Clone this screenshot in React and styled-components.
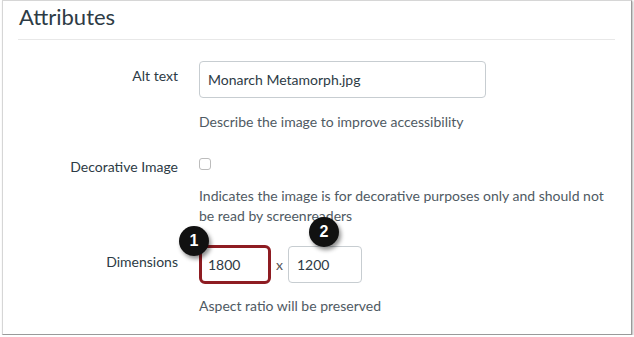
import styled, { createGlobalStyle } from "styled-components";

const Global = createGlobalStyle`
    body {
        margin: 0;
        background: #fff;
        font-family: Lato, "Open Sans", sans-serif;
    }
`

// MOLDURA
const Frame = styled.div`
    margin-left: 2px;
    width: 630px;
    height: 335px;
    box-sizing: border-box;
    border: 1px solid #d6d6d6;
    border-right-color: #9a9a9a;
    border-bottom-color: #9a9a9a;
    box-shadow: 1px 1px 2px rgba(0, 0, 0, 0.3);
    padding: 0 16px 0 15px;
    overflow: hidden;
`

const Heading = styled.h2`
    margin: 0;
    padding: 3px 0 9px 1px;
    font-size: 22px;
    line-height: 26px;
    font-weight: 400;
    color: #2d3b45;
    border-bottom: 1px solid #e8e8e8;
`

// LINHAS DO FORMULARIO
const Row = styled.div`
    display: grid;
    grid-template-columns: 160px 1fr;
    column-gap: 21px;
    margin-top: ${(p) => p.$gap}px;
`

const Label = styled.div`
    text-align: right;
    font-size: 14px;
    line-height: 20px;
    color: #2d3b45;
    padding-top: ${(p) => p.$top}px;
`

const Field = styled.div`
    display: flex;
    flex-direction: column;
    align-items: flex-start;
`

const TextInput = styled.div`
    box-sizing: border-box;
    width: ${(p) => p.$width}px;
    height: ${(p) => (p.$focus ? 39 : 37)}px;
    border: ${(p) => (p.$focus ? "3px solid #8e1c22" : "1px solid #c7cdd1")};
    border-radius: ${(p) => (p.$focus ? 6 : 4)}px;
    padding-left: ${(p) => (p.$focus ? 6 : 8)}px;
    display: flex;
    align-items: center;
    font-size: 14px;
    color: #2d3b45;
    position: relative;
    background: #fff;
`

const Hint = styled.p`
    margin: ${(p) => p.$top}px 0 0 0;
    font-size: 14px;
    line-height: 20px;
    color: #4f5a63;
`

const Checkbox = styled.span`
    display: block;
    box-sizing: border-box;
    width: 12px;
    height: 12px;
    margin-top: 6px;
    border: 1px solid #bcbcbc;
    border-radius: 3px;
`

const DimRow = styled.div`
    display: flex;
    align-items: center;
    gap: 5px;
`

const Times = styled.span`
    font-size: 14px;
    color: #555;
`

const Badge = styled.span`
    position: absolute;
    left: ${(p) => p.$x}px;
    top: ${(p) => p.$y}px;
    width: 30px;
    height: 30px;
    border-radius: 50%;
    background: #111;
    color: #fff;
    font-family: "Liberation Sans", Arial, sans-serif;
    font-weight: 700;
    font-size: 16px;
    display: flex;
    align-items: center;
    justify-content: center;
    box-shadow: 2px 3px 4px rgba(0, 0, 0, 0.45);
`

function App() {
    return (
        <>
            <Global />
            <Frame>
                <Heading>Attributes</Heading>

                <Row $gap={21}>
                    <Label $top={5}>Alt text</Label>
                    <Field>
                        <TextInput $width={287}>Monarch Metamorph.jpg</TextInput>
                        <Hint $top={14}>Describe the image to improve accessibility</Hint>
                    </Field>
                </Row>

                <Row $gap={20}>
                    <Label $top={5}>Decorative Image</Label>
                    <Field>
                        <Checkbox />
                        <Hint $top={16}>
                            Indicates the image is for decorative purposes only and should not be read by screenreaders
                        </Hint>
                    </Field>
                </Row>

                <Row $gap={19}>
                    <Label $top={7}>Dimensions</Label>
                    <Field>
                        <DimRow>
                            <TextInput $width={72} $focus>
                                1800
                                <Badge $x={-23} $y={-22}>1</Badge>
                            </TextInput>
                            <Times>x</Times>
                            <TextInput $width={74}>
                                1200
                                <Badge $x={20} $y={-30}>2</Badge>
                            </TextInput>
                        </DimRow>
                        <Hint $top={12}>Aspect ratio will be preserved</Hint>
                    </Field>
                </Row>
            </Frame>
        </>
    )
}

export default App
